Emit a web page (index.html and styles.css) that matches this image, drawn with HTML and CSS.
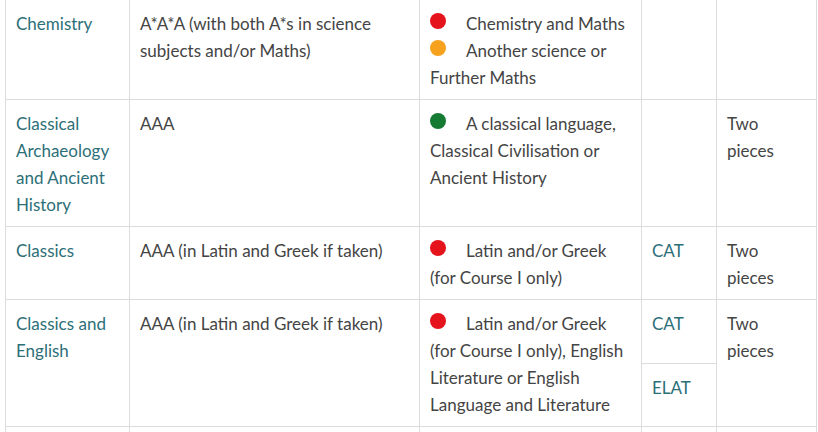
FILE: index.html
```html
<!DOCTYPE html>
<html>
<head>
<meta charset="utf-8">
<link rel="stylesheet" href="styles.css">
</head>
<body>
<table class="req">
  <colgroup>
    <col class="c1"><col class="c2"><col class="c3"><col class="c4"><col class="c5">
  </colgroup>
  <tbody>
    <tr>
      <td><a href="#">Chemistry</a></td>
      <td>A*A*A (with both A*s in science subjects and/or Maths)</td>
      <td><span class="dot red"></span>Chemistry and Maths<br><span class="dot amber"></span>Another science or Further Maths</td>
      <td></td>
      <td></td>
    </tr>
    <tr>
      <td><a href="#">Classical Archaeology and Ancient History</a></td>
      <td>AAA</td>
      <td><span class="dot green"></span>A classical language, Classical Civilisation or Ancient History</td>
      <td></td>
      <td>Two pieces</td>
    </tr>
    <tr>
      <td><a href="#">Classics</a></td>
      <td>AAA (in Latin and Greek if taken)</td>
      <td><span class="dot red"></span>Latin and/or Greek (for Course I only)</td>
      <td><a href="#">CAT</a></td>
      <td>Two pieces</td>
    </tr>
    <tr>
      <td rowspan="2"><a href="#">Classics and English</a></td>
      <td rowspan="2">AAA (in Latin and Greek if taken)</td>
      <td rowspan="2"><span class="dot red"></span>Latin and/or Greek (for Course I only), English Literature or English Language and Literature</td>
      <td class="split"><a href="#">CAT</a></td>
      <td rowspan="2">Two pieces</td>
    </tr>
    <tr>
      <td class="split"><a href="#">ELAT</a></td>
    </tr>
    <tr>
      <td>&nbsp;</td><td></td><td></td><td></td><td></td>
    </tr>
  </tbody>
</table>
</body>
</html>
```

FILE: styles.css
```css
html, body {
  margin: 0;
  padding: 0;
  background: #ffffff;
}
body {
  padding: 0 0 0 5px;
  font-family: "Lato", "Noto Sans", sans-serif;
  font-size: 17px;
  color: #444444;
  overflow: hidden;
}
.req {
  border-collapse: collapse;
  table-layout: fixed;
  width: 811px;
  margin-top: -1px;
}
.c1 { width: 124px; }
.c2 { width: 290px; }
.c3 { width: 222px; }
.c4 { width: 75px; }
.c5 { width: 100px; }
.req td {
  border: 1px solid #dcdcdc;
  padding: 10px 10px 8px 10px;
  vertical-align: top;
  line-height: 27px;
  text-align: left;
}
.req td.split {
  height: 40px;
}
.req a {
  color: #2d6f78;
  text-decoration: none;
}
.dot {
  display: inline-block;
  width: 16px;
  height: 16px;
  border-radius: 50%;
  margin-right: 20px;
  vertical-align: 1px;
}
.red { background: #e5131b; }
.amber { background: #f6a21e; }
.green { background: #157a32; }
```
